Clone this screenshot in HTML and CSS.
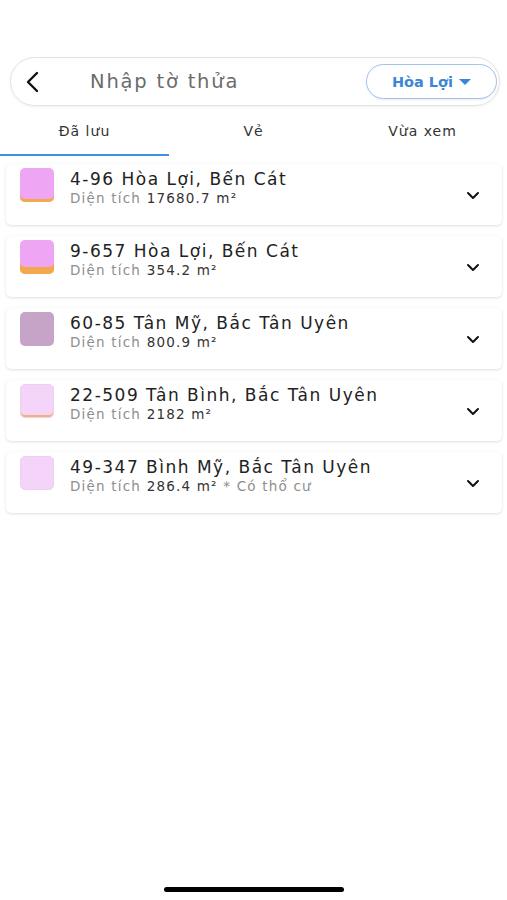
FILE: index.html
```html
<!DOCTYPE html>
<html lang="vi">
<head>
  <meta charset="UTF-8" />
  <meta name="viewport" content="width=device-width, initial-scale=1.0"/>
  <title>Tra cứu thửa đất</title>
  <link rel="stylesheet" href="styles.css">
</head>
<body>
  <div class="page">
    <div class="search">
      <button class="back" aria-label="Quay lại">
        <svg width="16" height="22" viewBox="0 0 16 22"><path d="M12 2 L3 11 L12 20" fill="none" stroke="#111" stroke-width="2.4" stroke-linecap="round" stroke-linejoin="round"/></svg>
      </button>
      <input class="query" type="text" placeholder="Nhập tờ thửa" />
      <button class="area">Hòa Lợi <span class="caret"></span></button>
    </div>

    <div class="tabs">
      <div class="tab active">Đã lưu</div>
      <div class="tab">Vẻ</div>
      <div class="tab">Vừa xem</div>
    </div>

    <div class="list">
      <div class="card">
        <div class="swatch pink stripe-thin"></div>
        <div class="info">
          <div class="name">4-96 Hòa Lợi, Bến Cát</div>
          <div class="meta">Diện tích <b>17680.7 m²</b></div>
        </div>
        <div class="chev"><svg width="14" height="9" viewBox="0 0 14 9"><path d="M2 2 L7 7 L12 2" fill="none" stroke="#111" stroke-width="2" stroke-linecap="round" stroke-linejoin="round"/></svg></div>
      </div>

      <div class="card">
        <div class="swatch pink stripe-thick"></div>
        <div class="info">
          <div class="name">9-657 Hòa Lợi, Bến Cát</div>
          <div class="meta">Diện tích <b>354.2 m²</b></div>
        </div>
        <div class="chev"><svg width="14" height="9" viewBox="0 0 14 9"><path d="M2 2 L7 7 L12 2" fill="none" stroke="#111" stroke-width="2" stroke-linecap="round" stroke-linejoin="round"/></svg></div>
      </div>

      <div class="card">
        <div class="swatch mauve"></div>
        <div class="info">
          <div class="name">60-85 Tân Mỹ, Bắc Tân Uyên</div>
          <div class="meta">Diện tích <b>800.9 m²</b></div>
        </div>
        <div class="chev"><svg width="14" height="9" viewBox="0 0 14 9"><path d="M2 2 L7 7 L12 2" fill="none" stroke="#111" stroke-width="2" stroke-linecap="round" stroke-linejoin="round"/></svg></div>
      </div>

      <div class="card">
        <div class="swatch light stripe-hair"></div>
        <div class="info">
          <div class="name">22-509 Tân Bình, Bắc Tân Uyên</div>
          <div class="meta">Diện tích <b>2182 m²</b></div>
        </div>
        <div class="chev"><svg width="14" height="9" viewBox="0 0 14 9"><path d="M2 2 L7 7 L12 2" fill="none" stroke="#111" stroke-width="2" stroke-linecap="round" stroke-linejoin="round"/></svg></div>
      </div>

      <div class="card">
        <div class="swatch light"></div>
        <div class="info">
          <div class="name">49-347 Bình Mỹ, Bắc Tân Uyên</div>
          <div class="meta">Diện tích <b>286.4 m²</b> * Có thổ cư</div>
        </div>
        <div class="chev"><svg width="14" height="9" viewBox="0 0 14 9"><path d="M2 2 L7 7 L12 2" fill="none" stroke="#111" stroke-width="2" stroke-linecap="round" stroke-linejoin="round"/></svg></div>
      </div>
    </div>

    <div class="home-bar"></div>
  </div>
</body>
</html>
```

FILE: styles.css
```css
body { margin: 0; background: #fff; font-family: "DejaVu Sans", "Noto Sans", sans-serif; color: #222; }
.page { height: 900px; padding-top: 57px; box-sizing: border-box; position: relative; }

.search { display: flex; align-items: center; height: 49px; margin: 0 7px 0 10px; border: 1px solid #e2e2e2; border-radius: 25px; box-shadow: 0 1px 3px rgba(0,0,0,0.06); box-sizing: border-box; padding: 0 2px 0 14px; }
.back { background: none; border: 0; padding: 0; width: 20px; height: 24px; display: flex; align-items: center; flex-shrink: 0; }
.query { flex: 1; min-width: 0; border: 0; outline: none; font: 19.5px "DejaVu Sans", sans-serif; letter-spacing: 1.8px; color: #333; margin-left: 45px; padding: 0; background: transparent; }
.query::placeholder { color: #6b6b6b; }
.area { flex-shrink: 0; height: 35px; width: 131px; border: 1px solid #9fc3ec; border-radius: 18px; background: #fff; color: #3d86d6; font: bold 14.5px "DejaVu Sans", sans-serif; display: flex; align-items: center; justify-content: center; gap: 6px; padding: 0 0 0 0; box-shadow: 0 1px 2px rgba(0,0,0,0.08); }
.caret { width: 0; height: 0; border-left: 6px solid transparent; border-right: 6px solid transparent; border-top: 6px solid #3d86d6; margin-top: 1px; }

.tabs { display: flex; margin-top: 3px; }
.tab { flex: 1; text-align: center; font-size: 14px; color: #333; height: 45px; line-height: 44px; border-bottom: 2px solid transparent; letter-spacing: 1px; }
.tab.active { border-bottom-color: #3f8fdf; }

.list { display: flex; flex-direction: column; gap: 11px; padding: 8px 5px 0 6px; }
.card { display: grid; grid-template-columns: 34px 1fr auto; column-gap: 16px; height: 61px; box-sizing: border-box; padding: 4px 22px 0 14px; border-radius: 5px; background: #fff; box-shadow: 0 1px 3px rgba(0,0,0,0.13); }

.swatch { width: 34px; height: 34px; border-radius: 5px; box-sizing: border-box; }
.pink { background: #eea5f4; }
.mauve { background: #c6a4c8; }
.light { background: #f4d4f9; border: 1px solid #ecd0f0; }
.stripe-thin { box-shadow: inset 0 -3px 0 #f3a84c; }
.stripe-thick { box-shadow: inset 0 -7px 0 #f3a84c; }
.stripe-hair { box-shadow: inset 0 -2px 0 #f4b27a; }

.info { min-width: 0; }
.name { font-size: 17px; line-height: 22px; color: #222; letter-spacing: 1.5px; }
.meta { font-size: 13.5px; line-height: 17px; color: #8e8e8e; letter-spacing: 1.2px; }
.meta b { font-weight: normal; color: #333; }

.chev { align-self: center; display: flex; margin-top: -2px; }

.home-bar { position: absolute; left: 164px; bottom: 8px; width: 180px; height: 5px; border-radius: 3px; background: #000; }
```
